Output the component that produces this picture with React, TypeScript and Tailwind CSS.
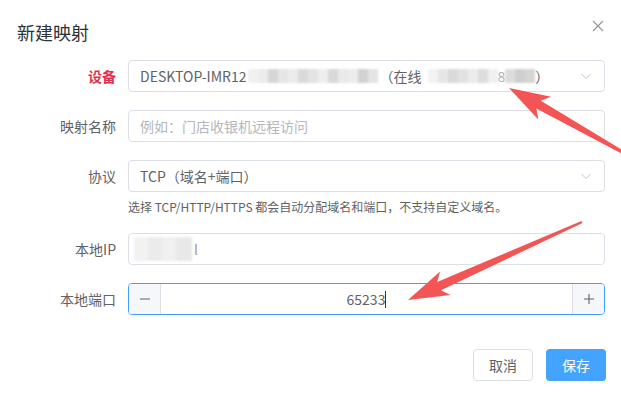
import React from "react";

type Pt = [number, number];

// 截图标注箭头（尾部细、头部带回勾）
const arrowPoints = (t: Pt, p: Pt) => {
  const dx = p[0] - t[0];
  const dy = p[1] - t[1];
  const len = Math.hypot(dx, dy);
  const ux = dx / len;
  const uy = dy / len;
  const nx = -uy;
  const ny = ux;
  const headLen = 34;
  const headW = 13;
  const neckW = 4.5;
  const tailW = 1.2;
  const nk: Pt = [p[0] - ux * headLen, p[1] - uy * headLen];
  const wg: Pt = [p[0] - ux * (headLen + 7), p[1] - uy * (headLen + 7)];
  const pts: Pt[] = [
    [t[0] + nx * tailW, t[1] + ny * tailW],
    [nk[0] + nx * neckW, nk[1] + ny * neckW],
    [wg[0] + nx * headW, wg[1] + ny * headW],
    p,
    [wg[0] - nx * headW, wg[1] - ny * headW],
    [nk[0] - nx * neckW, nk[1] - ny * neckW],
    [t[0] - nx * tailW, t[1] - ny * tailW],
  ];
  return pts.map((q) => `${q[0].toFixed(1)},${q[1].toFixed(1)}`).join(" ");
};

const Mosaic = ({ shades, className = "" }: { shades: string[]; className?: string }) => (
  <span className={`inline-flex items-center blur-[1px] ${className}`}>
    {shades.map((s, i) => (
      <span key={i} className="inline-block w-[10px] h-[14px]" style={{ backgroundColor: s }} />
    ))}
  </span>
);

const Chevron = () => (
  <svg width="12" height="12" viewBox="0 0 12 12" className="text-[#c0c4cc]">
    <path d="M1.5 4 L6 8.5 L10.5 4" fill="none" stroke="currentColor" strokeWidth="1" />
  </svg>
);

const Label = ({ children, required }: { children: React.ReactNode; required?: boolean }) => (
  <div
    className={`w-[128px] shrink-0 pr-3 text-right text-[14px] leading-[32px] ${
      required ? "text-[#e0304e] font-bold" : "text-[#606266]"
    }`}
  >
    {children}
  </div>
);

export default function App() {
  return (
    <div
      className="relative w-[621px] h-[398px] overflow-hidden bg-white"
      style={{ fontFamily: '"Noto Sans CJK SC", "Noto Sans", sans-serif' }}
    >
      {/* 标题 */}
      <div className="flex items-center justify-between pl-[17px] pr-[17px] pt-[20px] h-[44px]">
        <h2 className="text-[18px] leading-[24px] text-[#303133]">新建映射</h2>
        <svg width="12" height="12" viewBox="0 0 12 12" className="-mt-[12px] text-[#909399]">
          <path d="M1 1 L11 11 M11 1 L1 11" stroke="currentColor" strokeWidth="1.1" />
        </svg>
      </div>

      {/* 表单 */}
      <div className="mt-[16px] pr-[16px] flex flex-col">
        <div className="flex">
          <Label required>设备</Label>
          <div className="flex-1 h-[32px] flex items-center justify-between border border-[#dcdfe6] rounded-[4px] pl-[11px] pr-[12px] text-[14px] text-[#606266]">
            <div className="flex items-center whitespace-nowrap">
              <span>DESKTOP-IMR12</span>
              <Mosaic
                className="ml-[1px]"
                shades={["#f0f0f0", "#ececec", "#d6d6d6", "#e6e6e6", "#ebebeb", "#dadada", "#e3e3e3", "#eeeeee", "#d8d8d8", "#e9e9e9", "#ececec", "#d2d2d2", "#e4e4e4"]}
              />
              <span className="ml-[2px]">（在线</span>
              <Mosaic
                className="ml-[6px]"
                shades={["#f3f3f3", "#e6e6e6", "#d9d9d9", "#e2e2e2", "#ececec", "#dddddd", "#f0f0f0"]}
              />
              <span className="text-[#b0b0b0]">8</span>
              <Mosaic shades={["#dcdcdc", "#cfcfcf", "#d5d5d5"]} />
              <span>）</span>
            </div>
            <Chevron />
          </div>
        </div>

        <div className="flex mt-[18px]">
          <Label>映射名称</Label>
          <div className="flex-1 h-[32px] flex items-center border border-[#dcdfe6] rounded-[4px] pl-[11px] text-[14px] text-[#b4b7bd]">
            例如：门店收银机远程访问
          </div>
        </div>

        <div className="flex mt-[18px]">
          <Label>协议</Label>
          <div className="flex-1">
            <div className="h-[32px] flex items-center justify-between border border-[#dcdfe6] rounded-[4px] pl-[11px] pr-[12px] text-[14px] text-[#606266]">
              <span>TCP（域名+端口）</span>
              <Chevron />
            </div>
            <p className="mt-[7px] text-[12px] leading-[16px] text-[#606266]">
              选择 TCP/HTTP/HTTPS 都会自动分配域名和端口，不支持自定义域名。
            </p>
          </div>
        </div>

        <div className="flex mt-[18px]">
          <Label>本地IP</Label>
          <div className="flex-1 h-[32px] flex items-center border border-[#dcdfe6] rounded-[4px] pl-[5px] text-[14px] text-[#606266]">
            <span className="inline-flex blur-[1px]">
              <span className="w-[14px] h-[24px] bg-[#f2f2f2]" />
              <span className="w-[14px] h-[24px] bg-[#ebebeb]" />
              <span className="w-[14px] h-[24px] bg-[#f0f0f0]" />
              <span className="w-[16px] h-[24px] bg-[#e8e8e8]" />
            </span>
            <span className="ml-[2px] text-[#9a9a9a]">l</span>
          </div>
        </div>

        <div className="flex mt-[18px]">
          <Label>本地端口</Label>
          <div className="flex-1 h-[32px] flex border border-[#409eff] rounded-[4px] overflow-hidden text-[14px] text-[#606266]">
            <div className="w-[32px] shrink-0 flex items-center justify-center bg-[#f5f7fa] border-r border-[#dcdfe6]">
              <svg width="12" height="12" viewBox="0 0 12 12">
                <path d="M1 6 H11" stroke="#606266" strokeWidth="1.1" />
              </svg>
            </div>
            <div className="flex-1 flex items-center justify-center">
              <span>65233</span>
              <span className="inline-block w-[1px] h-[17px] bg-[#303133]" />
            </div>
            <div className="w-[32px] shrink-0 flex items-center justify-center bg-[#f5f7fa] border-l border-[#dcdfe6]">
              <svg width="12" height="12" viewBox="0 0 12 12">
                <path d="M1 6 H11 M6 1 V11" stroke="#606266" strokeWidth="1.1" />
              </svg>
            </div>
          </div>
        </div>
      </div>

      {/* 按钮 */}
      <div className="mt-[34px] pr-[15px] flex justify-end gap-[13px]">
        <button className="w-[60px] h-[32px] rounded-[4px] border border-[#dcdfe6] bg-white text-[14px] text-[#606266]">
          取消
        </button>
        <button className="w-[60px] h-[32px] rounded-[4px] bg-[#44a3ff] text-[14px] text-white">
          保存
        </button>
      </div>

      {/* 标注箭头 */}
      <svg className="absolute inset-0 pointer-events-none" width="621" height="398">
        <polygon points={arrowPoints([640, 162], [509, 88])} fill="#f35454" />
        <polygon points={arrowPoints([582, 222], [408, 300])} fill="#f35454" />
      </svg>
    </div>
  );
}
